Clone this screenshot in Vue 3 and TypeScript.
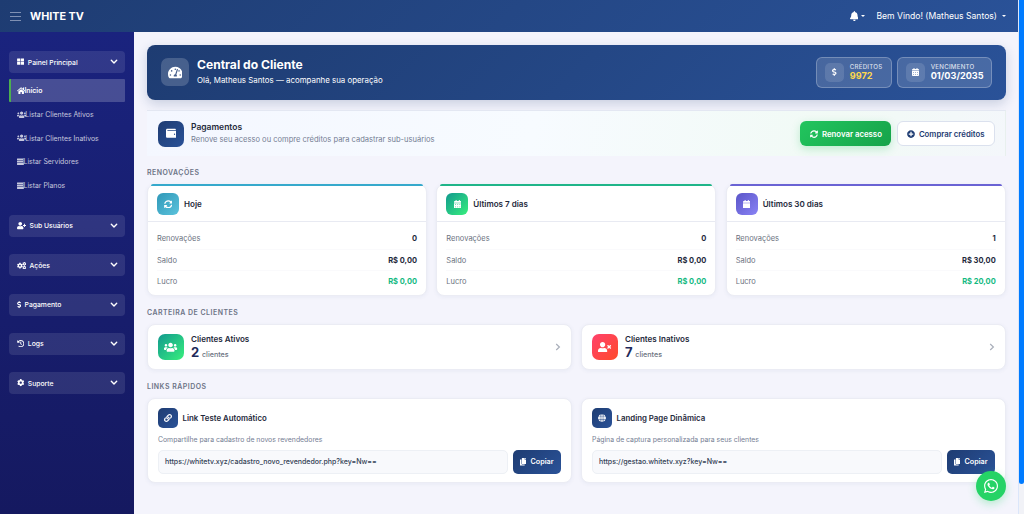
<script setup lang="ts">
import { defineComponent, h } from 'vue'

interface Glyph { box: string; paths: string[] }

const person = 'M224 256c70.7 0 128-57.3 128-128S294.7 0 224 0 96 57.3 96 128s57.3 128 128 128zm89.6 32h-16.7c-22.2 10.2-46.9 16-72.9 16s-50.6-5.8-72.9-16h-16.7C60.2 288 0 348.2 0 422.4V464c0 26.5 21.5 48 48 48h352c26.5 0 48-21.5 48-48v-41.6c0-74.2-60.2-134.4-134.4-134.4z'

const glyphs: Record<string, Glyph> = {
  bell: { box: '0 0 448 512', paths: ['M224 512c35.32 0 63.97-28.65 63.97-64H160.03c0 35.35 28.65 64 63.97 64zm215.39-149.71c-19.32-20.76-55.47-51.99-55.47-154.29 0-77.7-54.48-139.9-127.94-155.16V32c0-17.67-14.32-32-31.98-32s-31.98 14.33-31.98 32v20.84C118.56 68.1 64.08 130.3 64.08 208c0 102.3-36.15 133.53-55.47 154.29-6 6.45-8.66 14.16-8.61 21.71.11 16.4 12.98 32 32.1 32h383.8c19.12 0 32-15.6 32.1-32 .05-7.55-2.61-15.27-8.61-21.71z'] },
  grid: { box: '0 0 512 512', paths: ['M24 32h208v208H0V56a24 24 0 0 1 24-24zM272 32h216a24 24 0 0 1 24 24v184H272zM0 272h232v208H24a24 24 0 0 1-24-24zM272 272h240v184a24 24 0 0 1-24 24H272z'] },
  home: { box: '0 0 576 512', paths: ['M280.37 148.26L96 300.11V464a16 16 0 0 0 16 16l112.06-.29a16 16 0 0 0 15.92-16V368a16 16 0 0 1 16-16h64a16 16 0 0 1 16 16v95.64a16 16 0 0 0 16 16.05L464 480a16 16 0 0 0 16-16V300L295.67 148.26a12.19 12.19 0 0 0-15.3 0zM571.6 251.47L488 182.56V44.05a12 12 0 0 0-12-12h-56a12 12 0 0 0-12 12v72.61L318.47 43a48 48 0 0 0-61 0L4.34 251.47a12 12 0 0 0-1.6 16.9l25.5 31A12 12 0 0 0 45.15 301l235.22-193.74a12.19 12.19 0 0 1 15.3 0L530.9 301a12 12 0 0 0 16.9-1.6l25.5-31a12 12 0 0 0-1.7-16.93z'] },
  users: { box: '0 0 640 512', paths: ['M96 224c35.3 0 64-28.7 64-64s-28.7-64-64-64-64 28.7-64 64 28.7 64 64 64zm448 0c35.3 0 64-28.7 64-64s-28.7-64-64-64-64 28.7-64 64 28.7 64 64 64zm32 32h-64c-17.6 0-33.5 7.1-45.1 18.6 40.3 22.1 68.9 62 75.1 109.4h66c17.7 0 32-14.3 32-32v-32c0-35.3-28.7-64-64-64zm-256 0c61.9 0 112-50.1 112-112S381.9 32 320 32 208 82.1 208 144s50.1 112 112 112zm76.8 32h-8.3c-20.8 10-43.9 16-68.5 16s-47.6-6-68.5-16h-8.3C179.6 288 128 339.6 128 403.2V432c0 26.5 21.5 48 48 48h288c26.5 0 48-21.5 48-48v-28.8c0-63.6-51.6-115.2-115.2-115.2zm-223.7-13.4C161.5 263.1 145.6 256 128 256H64c-35.3 0-64 28.7-64 64v32c0 17.7 14.3 32 32 32h65.9c6.3-47.4 34.9-87.3 75.2-109.4z'] },
  server: { box: '0 0 512 512', paths: ['M24 32h464a24 24 0 0 1 24 24v80a24 24 0 0 1-24 24H24a24 24 0 0 1-24-24V56a24 24 0 0 1 24-24zm400 40v48h48V72zM24 192h464a24 24 0 0 1 24 24v80a24 24 0 0 1-24 24H24a24 24 0 0 1-24-24v-80a24 24 0 0 1 24-24zm400 40v48h48v-48zM24 352h464a24 24 0 0 1 24 24v80a24 24 0 0 1-24 24H24a24 24 0 0 1-24-24v-80a24 24 0 0 1 24-24zm400 40v48h48v-48z'] },
  userPlus: { box: '0 0 640 512', paths: ['M624 208h-64v-64c0-8.8-7.2-16-16-16h-32c-8.8 0-16 7.2-16 16v64h-64c-8.8 0-16 7.2-16 16v32c0 8.8 7.2 16 16 16h64v64c0 8.8 7.2 16 16 16h32c8.8 0 16-7.2 16-16v-64h64c8.8 0 16-7.2 16-16v-32c0-8.8-7.2-16-16-16z', person] },
  userTimes: { box: '0 0 640 512', paths: ['M589.6 240l45.6-45.6c6.3-6.3 6.3-16.5 0-22.8l-22.8-22.8c-6.3-6.3-16.5-6.3-22.8 0L544 194.4l-45.6-45.6c-6.3-6.3-16.5-6.3-22.8 0l-22.8 22.8c-6.3 6.3-6.3 16.5 0 22.8l45.6 45.6-45.6 45.6c-6.3 6.3-6.3 16.5 0 22.8l22.8 22.8c6.3 6.3 16.5 6.3 22.8 0l45.6-45.6 45.6 45.6c6.3 6.3 16.5 6.3 22.8 0l22.8-22.8c6.3-6.3 6.3-16.5 0-22.8L589.6 240z', person] },
  dollar: { box: '0 0 288 512', paths: ['M209.2 233.4l-108-31.6C88.7 198.2 80 186.5 80 173.5c0-16.3 13.2-29.5 29.5-29.5h66.3c12.2 0 24.2 3.7 34.2 10.5 6.1 4.1 14.3 3.1 19.5-2l34.8-34c7.1-6.9 6.1-18.4-1.8-24.5C238 74.8 207.4 64.1 176 64V16c0-8.8-7.2-16-16-16h-32c-8.8 0-16 7.2-16 16v48h-2.5C45.8 64-5.4 118.7.5 183.6c4.2 46.1 39.4 83.6 83.8 96.6l102.5 30c12.5 3.7 21.2 15.3 21.2 28.3 0 16.3-13.2 29.5-29.5 29.5h-66.3C100 368 88 364.3 78 357.5c-6.1-4.1-14.3-3.1-19.5 2l-34.8 34c-7.1 6.9-6.1 18.4 1.8 24.5 24.5 19.2 55.1 29.9 86.5 30v48c0 8.8 7.2 16 16 16h32c8.8 0 16-7.2 16-16v-48.2c46.6-.9 90.3-28.6 105.7-72.7 21.5-61.6-14.6-124.8-72.5-141.7z'] },
  cog: { box: '0 0 512 512', paths: ['M487.4 315.7l-42.6-24.6c4.3-23.2 4.3-47 0-70.2l42.6-24.6c4.9-2.8 7.1-8.6 5.5-14-11.1-35.6-30-67.8-54.7-94.6-3.8-4.1-10-5.1-14.8-2.3L380.8 110c-17.9-15.4-38.5-27.3-60.8-35.1V25.8c0-5.6-3.9-10.5-9.4-11.7-36.7-8.2-74.3-7.8-109.2 0-5.5 1.2-9.4 6.1-9.4 11.7V75c-22.2 7.9-42.8 19.8-60.8 35.1L88.7 85.5c-4.9-2.8-11-1.9-14.8 2.3-24.7 26.7-43.6 58.9-54.7 94.6-1.7 5.4.6 11.2 5.5 14L67.3 221c-4.3 23.2-4.3 47 0 70.2l-42.6 24.6c-4.9 2.8-7.1 8.6-5.5 14 11.1 35.6 30 67.8 54.7 94.6 3.8 4.1 10 5.1 14.8 2.3l42.6-24.6c17.9 15.4 38.5 27.3 60.8 35.1v49.2c0 5.6 3.9 10.5 9.4 11.7 36.7 8.2 74.3 7.8 109.2 0 5.5-1.2 9.4-6.1 9.4-11.7v-49.2c22.2-7.9 42.8-19.8 60.8-35.1l42.6 24.6c4.9 2.8 11 1.9 14.8-2.3 24.7-26.7 43.6-58.9 54.7-94.6 1.5-5.5-.7-11.3-5.6-14.1zM256 336c-44.1 0-80-35.9-80-80s35.9-80 80-80 80 35.9 80 80-35.9 80-80 80z'] },
  history: { box: '0 0 512 512', paths: ['M504 255.531c.253 136.64-111.18 248.372-247.82 248.468-59.015.042-113.223-20.53-155.822-54.911-11.077-8.94-11.905-25.541-1.839-35.607l11.267-11.267c8.609-8.609 22.353-9.551 31.891-1.984C173.062 425.135 212.781 440 256 440c101.705 0 184-82.311 184-184 0-101.705-82.311-184-184-184-48.814 0-93.149 18.969-126.068 49.932l50.754 50.754c10.08 10.08 2.941 27.314-11.313 27.314H24c-8.837 0-16-7.163-16-16V38.627c0-14.254 17.234-21.393 27.314-11.314l49.372 49.372C129.209 34.136 189.552 8 256 8c136.81 0 247.747 110.78 248 247.531zm-180.912 78.784l9.823-12.63c8.138-10.463 6.253-25.542-4.21-33.679L288 256.349V152c0-13.255-10.745-24-24-24h-16c-13.255 0-24 10.745-24 24v135.651l65.409 50.874c10.463 8.137 25.541 6.253 33.679-4.21z'] },
  gauge: { box: '0 0 576 512', paths: ['M288 32C128.94 32 0 160.94 0 320c0 52.8 14.25 102.26 39.06 144.8 5.61 9.62 16.3 15.2 27.44 15.2h443c11.14 0 21.83-5.58 27.44-15.2C561.75 422.26 576 372.8 576 320c0-159.06-128.94-288-288-288zm0 64c14.71 0 26.58 10.13 30.32 23.65-1.11 2.26-2.64 4.23-3.45 6.67l-9.22 27.67c-5.13 3.49-10.97 6.01-17.64 6.01-17.67 0-32-14.33-32-32S270.33 96 288 96zM96 384c-17.67 0-32-14.33-32-32s14.33-32 32-32 32 14.33 32 32-14.33 32-32 32zm48-160c-17.67 0-32-14.33-32-32s14.33-32 32-32 32 14.33 32 32-14.33 32-32 32zm246.77-72.41l-61.33 184C343.13 347.33 352 364.54 352 384c0 11.72-3.38 22.55-8.88 32H232.88c-5.5-9.45-8.88-20.28-8.88-32 0-33.94 26.5-61.43 59.9-63.59l61.34-184.01c4.17-12.56 17.73-19.45 30.36-15.17 12.57 4.19 19.35 17.79 15.17 30.36zm14.66 57.2l15.52-46.55c3.47-1.29 7.13-2.23 11.05-2.23 17.67 0 32 14.33 32 32s-14.33 32-32 32c-11.38-.01-20.89-6.28-26.57-15.22zM480 384c-17.67 0-32-14.33-32-32s14.33-32 32-32 32 14.33 32 32-14.33 32-32 32z'] },
  wallet: { box: '0 0 512 512', paths: ['M461.2 128H80c-8.84 0-16-7.16-16-16s7.16-16 16-16h384c8.84 0 16-7.16 16-16 0-26.51-21.49-48-48-48H64C28.65 32 0 60.65 0 96v320c0 35.35 28.65 64 64 64h397.2c28.02 0 50.8-21.53 50.8-48V176c0-26.47-22.78-48-50.8-48zM416 336c-17.67 0-32-14.33-32-32s14.33-32 32-32 32 14.33 32 32-14.33 32-32 32z'] },
  sync: { box: '0 0 512 512', paths: ['M370.72 133.28C339.458 104.008 298.888 87.962 255.848 88c-77.458.068-144.328 53.178-162.791 126.85-1.344 5.363-6.122 9.15-11.651 9.15H24.103c-7.498 0-13.194-6.807-11.807-14.176C33.933 94.924 134.813 8 256 8c66.448 0 126.791 26.136 171.315 68.685L463.03 40.97C478.149 25.851 504 36.559 504 57.941V192c0 13.255-10.745 24-24 24H345.941c-21.382 0-32.09-25.851-16.971-40.971l41.75-41.749zM32 296h134.059c21.382 0 32.09 25.851 16.971 40.971l-41.75 41.75c31.262 29.273 71.835 45.319 114.876 45.28 77.418-.07 144.315-53.144 162.787-126.849 1.344-5.363 6.122-9.15 11.651-9.15h57.304c7.498 0 13.194 6.807 11.807 14.176C478.067 417.076 377.187 504 256 504c-66.448 0-126.791-26.136-171.315-68.685L48.97 471.03C33.851 486.149 8 475.441 8 454.059V320c0-13.255 10.745-24 24-24z'] },
  plusCircle: { box: '0 0 512 512', paths: ['M256 8C119 8 8 119 8 256s111 248 248 248 248-111 248-248S393 8 256 8zm144 276c0 6.6-5.4 12-12 12h-92v92c0 6.6-5.4 12-12 12h-56c-6.6 0-12-5.4-12-12v-92h-92c-6.6 0-12-5.4-12-12v-56c0-6.6 5.4-12 12-12h92v-92c0-6.6 5.4-12 12-12h56c6.6 0 12 5.4 12 12v92h92c6.6 0 12 5.4 12 12v56z'] },
  calendar: { box: '0 0 448 512', paths: ['M12 192h424c6.6 0 12 5.4 12 12v260c0 26.5-21.5 48-48 48H48c-26.5 0-48-21.5-48-48V204c0-6.6 5.4-12 12-12zm436-44v-36c0-26.5-21.5-48-48-48h-48V12c0-6.6-5.4-12-12-12h-40c-6.6 0-12 5.4-12 12v52H160V12c0-6.6-5.4-12-12-12h-40c-6.6 0-12 5.4-12 12v52H48C21.5 64 0 85.5 0 112v36c0 6.6 5.4 12 12 12h424c6.6 0 12-5.4 12-12z'] },
  calendarDays: { box: '0 0 448 512', paths: ['M0 192h448v272c0 26.5-21.5 48-48 48H48c-26.5 0-48-21.5-48-48zM72 256v48h48v-48zm128 0v48h48v-48zm128 0v48h48v-48zM72 384v48h48v-48zm128 0v48h48v-48zm128 0v48h48v-48zM448 160v-48c0-26.5-21.5-48-48-48h-48V12c0-6.6-5.4-12-12-12h-40c-6.6 0-12 5.4-12 12v52H160V12c0-6.6-5.4-12-12-12h-40c-6.6 0-12 5.4-12 12v52H48C21.5 64 0 85.5 0 112v48z'] },
  link: { box: '0 0 512 512', paths: ['M326.612 185.391c59.747 59.809 58.927 155.698.36 214.59-.11.12-.24.25-.36.37l-67.2 67.2c-59.27 59.27-155.699 59.262-214.96 0-59.27-59.26-59.27-155.7 0-214.96l37.106-37.106c9.84-9.84 26.786-3.3 27.294 10.606.648 17.722 3.826 35.527 9.69 52.721 1.986 5.822.567 12.262-3.783 16.612l-13.087 13.087c-28.026 28.026-28.905 73.66-1.155 101.96 28.024 28.579 74.086 28.749 102.325.51l67.2-67.19c28.191-28.191 28.073-73.757 0-101.83-3.701-3.694-7.429-6.564-10.341-8.569a16.037 16.037 0 0 1-6.947-12.606c-.396-10.567 3.348-21.456 11.698-29.806l21.054-21.055c5.521-5.521 14.182-6.199 20.584-1.731a152.482 152.482 0 0 1 20.522 17.197zM467.547 44.449c-59.261-59.262-155.69-59.27-214.96 0l-67.2 67.2c-.12.12-.25.25-.36.37-58.566 58.892-59.387 154.781.36 214.59a152.454 152.454 0 0 0 20.521 17.196c6.402 4.468 15.064 3.789 20.584-1.731l21.054-21.055c8.35-8.35 12.094-19.239 11.698-29.806a16.037 16.037 0 0 0-6.947-12.606c-2.912-2.005-6.64-4.875-10.341-8.569-28.073-28.073-28.191-73.639 0-101.83l67.2-67.19c28.239-28.239 74.3-28.069 102.325.51 27.75 28.3 26.872 73.934-1.155 101.96l-13.087 13.087c-4.35 4.35-5.769 10.79-3.783 16.612 5.864 17.194 9.042 34.999 9.69 52.721.509 13.906 17.454 20.446 27.294 10.606l37.106-37.106c59.271-59.259 59.271-155.699.001-214.959z'] },
  globe: { box: '0 0 512 512', paths: ['M240 8C190 18 160 80 154 152h86zM272 8v144h86C352 80 322 18 272 8zM150 176q-6 80 0 160h90V176zM272 176v160h90q6-80 0-160zM154 360c6 72 36 134 86 144V360zM272 360v144c50-10 80-72 86-144zM181 19A248 248 0 0 0 34 152h94c5-54 20-104 53-133zM331 19c33 29 48 79 53 133h94A248 248 0 0 0 331 19zM22 176a248 248 0 0 0 0 160h102q-6-80 0-160zM388 176q6 80 0 160h102a248 248 0 0 0 0-160zM34 360a248 248 0 0 0 147 133c-33-29-48-79-53-133zM384 360c-5 54-20 104-53 133a248 248 0 0 0 147-133z'] },
  copy: { box: '0 0 448 512', paths: ['M320 448v40c0 13.255-10.745 24-24 24H24c-13.255 0-24-10.745-24-24V120c0-13.255 10.745-24 24-24h72v296c0 30.879 25.121 56 56 56h168zm0-344V0H152c-13.255 0-24 10.745-24 24v368c0 13.255 10.745 24 24 24h272c13.255 0 24-10.745 24-24V128H344c-13.2 0-24-10.8-24-24zm120.971-31.029L375.029 7.029A24 24 0 0 0 358.059 0H352v96h96v-6.059a24 24 0 0 0-7.029-16.97z'] },
  whatsapp: { box: '0 0 448 512', paths: ['M380.9 97.1C339 55.1 283.2 32 223.9 32c-122.4 0-222 99.6-222 222 0 39.1 10.2 77.3 29.6 111L0 480l117.7-30.9c32.4 17.7 68.9 27 106.1 27h.1c122.3 0 224.1-99.6 224.1-222 0-59.3-25.2-115-67.1-157zm-157 341.6c-33.2 0-65.7-8.9-94-25.7l-6.7-4-69.8 18.3L72 359.2l-4.4-7c-18.5-29.4-28.2-63.3-28.2-98.2 0-101.7 82.8-184.5 184.6-184.5 49.3 0 95.6 19.2 130.4 54.1 34.8 34.9 56.2 81.2 56.1 130.5 0 101.8-84.9 184.6-186.6 184.6zm101.2-138.2c-5.5-2.8-32.8-16.2-37.9-18-5.1-1.9-8.8-2.8-12.5 2.8-3.7 5.6-14.3 18-17.6 21.8-3.2 3.7-6.5 4.2-12 1.4-32.6-16.3-54-29.1-75.5-66-5.7-9.8 5.7-9.1 16.3-30.3 1.8-3.7.9-6.9-.5-9.7-1.4-2.8-12.5-30.1-17.1-41.2-4.5-10.8-9.1-9.3-12.5-9.5-3.2-.2-6.9-.2-10.6-.2-3.7 0-9.7 1.4-14.8 6.9-5.1 5.6-19.4 19-19.4 46.3 0 27.3 19.9 53.7 22.6 57.4 2.8 3.7 39.1 59.7 94.8 83.8 35.2 15.2 49 16.5 66.6 13.9 10.7-1.6 32.8-13.4 37.4-26.4 4.6-13 4.6-24.1 3.2-26.4-1.3-2.5-5-3.9-10.5-6.6z'] },
}

const Icon = defineComponent({
  props: { name: { type: String, required: true } },
  setup(props) {
    return () => {
      if (props.name === 'cogs') {
        const d = glyphs.cog.paths[0]
        return h('svg', { viewBox: '0 0 640 512', fill: 'currentColor', 'fill-rule': 'evenodd' }, [
          h('path', { d, transform: 'translate(-6 46) scale(.82)' }),
          h('path', { d, transform: 'translate(376 -8) scale(.53)' }),
          h('path', { d, transform: 'translate(376 254) scale(.53)' }),
        ])
      }
      const g = glyphs[props.name]
      return h('svg', { viewBox: g.box, fill: 'currentColor', 'fill-rule': 'evenodd' }, g.paths.map((d) => h('path', { d })))
    }
  },
})

const mainLinks = [
  { icon: 'home', label: 'Início', active: true },
  { icon: 'users', label: 'Listar Clientes Ativos', active: false },
  { icon: 'users', label: 'Listar Clientes Inativos', active: false },
  { icon: 'server', label: 'Listar Servidores', active: false },
  { icon: 'server', label: 'Listar Planos', active: false },
]

const groups = [
  { icon: 'userPlus', label: 'Sub Usuários', cls: 'wide' },
  { icon: 'cogs', label: 'Ações', cls: 'wide' },
  { icon: 'dollar', label: 'Pagamento', cls: 'thin' },
  { icon: 'history', label: 'Logs', cls: '' },
  { icon: 'cog', label: 'Suporte', cls: '' },
]

const renewals = [
  { tone: 'cyan', icon: 'sync', title: 'Hoje', count: '0', saldo: 'R$ 0,00', lucro: 'R$ 0,00' },
  { tone: 'green', icon: 'calendarDays', title: 'Últimos 7 dias', count: '0', saldo: 'R$ 0,00', lucro: 'R$ 0,00' },
  { tone: 'violet', icon: 'calendar', title: 'Últimos 30 dias', count: '1', saldo: 'R$ 30,00', lucro: 'R$ 20,00' },
]

const wallets = [
  { tone: 'green', icon: 'users', title: 'Clientes Ativos', total: 2 },
  { tone: 'red', icon: 'userTimes', title: 'Clientes Inativos', total: 7 },
]

const links = [
  { icon: 'link', title: 'Link Teste Automático', text: 'Compartilhe para cadastro de novos revendedores', url: 'https://whitetv.xyz/cadastro_novo_revendedor.php?key=Nw==' },
  { icon: 'globe', title: 'Landing Page Dinâmica', text: 'Página de captura personalizada para seus clientes', url: 'https://gestao.whitetv.xyz?key=Nw==' },
]
</script>

<template>
  <div class="page">
    <div class="screen">
      <header class="topbar">
        <span class="burger"><i /><i /><i /></span>
        <strong class="brand">WHITE TV</strong>
        <Icon name="bell" class="bell" />
        <span class="caret" />
        <span class="welcome">Bem Vindo! (Matheus Santos)</span>
        <span class="caret" />
      </header>
      <div class="body">
        <nav class="sidebar">
          <div class="group">
            <Icon name="grid" class="gi" /><span>Painel Principal</span>
            <svg class="chev" viewBox="0 0 8 6"><path d="M1.3 1.3 4 4l2.7-2.7" /></svg>
          </div>
          <ul class="sub">
            <li v-for="l in mainLinks" :key="l.label" :class="{ active: l.active }">
              <Icon :name="l.icon" class="li" /><span>{{ l.label }}</span>
            </li>
          </ul>
          <div v-for="g in groups" :key="g.label" class="group" :class="g.cls">
            <Icon :name="g.icon" class="gi" /><span>{{ g.label }}</span>
            <svg class="chev" viewBox="0 0 8 6"><path d="M1.3 1.3 4 4l2.7-2.7" /></svg>
          </div>
        </nav>
        <main class="main">
          <section class="hero">
            <div class="hero-icon"><Icon name="gauge" /></div>
            <div class="hero-text">
              <h1>Central do Cliente</h1>
              <p>Olá, Matheus Santos — acompanhe sua operação</p>
            </div>
            <div class="stat credits">
              <div class="stat-icon"><Icon name="dollar" /></div>
              <div><small>CRÉDITOS</small><b class="gold">9972</b></div>
            </div>
            <div class="stat due">
              <div class="stat-icon"><Icon name="calendarDays" /></div>
              <div><small>VENCIMENTO</small><b>01/03/2035</b></div>
            </div>
          </section>

          <section class="pay">
            <div class="tile navy"><Icon name="wallet" /></div>
            <div class="pay-text">
              <h2>Pagamentos</h2>
              <p>Renove seu acesso ou compre créditos para cadastrar sub-usuários</p>
            </div>
            <button class="btn renew"><Icon name="sync" /><span>Renovar acesso</span></button>
            <button class="btn buy"><Icon name="plusCircle" /><span>Comprar créditos</span></button>
          </section>

          <h3 class="label">RENOVAÇÕES</h3>
          <div class="cols three">
            <article v-for="r in renewals" :key="r.title" class="card renewal" :class="'top-' + r.tone">
              <header>
                <div class="tile small" :class="r.tone"><Icon :name="r.icon" /></div>
                <h4>{{ r.title }}</h4>
              </header>
              <dl>
                <div><dt>Renovações</dt><dd>{{ r.count }}</dd></div>
                <div><dt>Saldo</dt><dd>{{ r.saldo }}</dd></div>
                <div><dt>Lucro</dt><dd class="profit">{{ r.lucro }}</dd></div>
              </dl>
            </article>
          </div>

          <h3 class="label">CARTEIRA DE CLIENTES</h3>
          <div class="cols two">
            <article v-for="w in wallets" :key="w.title" class="card wallet">
              <div class="tile" :class="w.tone"><Icon :name="w.icon" /></div>
              <div class="wallet-text">
                <h4>{{ w.title }}</h4>
                <p><b>{{ w.total }}</b> clientes</p>
              </div>
              <svg class="next" viewBox="0 0 6 8"><path d="M1.2 1 4.4 4 1.2 7" /></svg>
            </article>
          </div>

          <h3 class="label last">LINKS RÁPIDOS</h3>
          <div class="cols two">
            <article v-for="k in links" :key="k.title" class="card quick">
              <header>
                <div class="tile mini navy"><Icon :name="k.icon" /></div>
                <h4>{{ k.title }}</h4>
              </header>
              <p>{{ k.text }}</p>
              <div class="copy-row">
                <div class="url">{{ k.url }}</div>
                <button class="btn copy"><Icon name="copy" /><span>Copiar</span></button>
              </div>
            </article>
          </div>
        </main>
      </div>
    </div>
    <div class="scroll"><div class="thumb" /></div>
    <a class="whats"><Icon name="whatsapp" /></a>
  </div>
</template>

<style>
html, body { margin: 0; overflow: hidden; }
</style>

<style scoped>
* { box-sizing: border-box; }
h1, h2, h3, h4, p, dl, dd, ul { margin: 0; padding: 0; }
svg { display: block; flex: none; }
.page { width: 1024px; height: 514px; display: flex; overflow: hidden; font-family: Inter, "Liberation Sans", sans-serif; background: #f4f4fc; }
.screen { flex: 1; display: flex; flex-direction: column; min-width: 0; }
.scroll { width: 6px; background: #f1f2f7; border-left: 1px solid #dbe6fa; }
.thumb { height: 484px; background: #007bff; border-radius: 0 0 3px 3px; }
.topbar { height: 32px; flex: none; display: flex; align-items: center; color: #fff; background: linear-gradient(135deg, #1e3c72, #2a5298); padding: 0 12px 0 10px; }
.burger { display: flex; flex-direction: column; gap: 3px; width: 10.5px; margin-right: 9.5px; padding-top: 1px; }
.burger i { height: 1px; background: #7f90b3; }
.brand { font-size: 10.8px; font-weight: 700; flex: 1; }
.bell { height: 10px; margin-right: 3px; }
.caret { border: 2px solid transparent; border-top: 2.3px solid #fff; border-bottom: 0; }
.welcome { font-size: 8.6px; margin: 0 5px 0 11px; }
.body { flex: 1; display: flex; min-height: 0; }
.sidebar { width: 134px; flex: none; padding: 19px 9px 0 8.5px; background: linear-gradient(180deg, #1a237e, #151960); color: #fff; }
.group { height: 22px; margin-bottom: 17.3px; border-radius: 4px; background: rgba(255,255,255,.1); display: flex; align-items: center; padding: 0 7.5px 0 8px; font-size: 6.8px; font-weight: 500; }
.gi { height: 7.3px; width: 7.5px; margin-right: 3.8px; }
.wide .gi { width: 9.2px; }
.thin .gi { width: 4.3px; }
.group span { flex: 1; }
.chev { width: 8px; height: 6px; fill: none; stroke: #fff; stroke-width: 1.4; stroke-linecap: round; stroke-linejoin: round; }
.sub { list-style: none; margin: -11.5px 0 17.7px; }
.sub li { height: 23.7px; display: flex; align-items: center; padding-left: 8px; font-size: 6.9px; color: rgba(255,255,255,.75); }
.sub li.active { color: #fff; font-weight: 600; background: rgba(255,255,255,.2); border-left: 2px solid #4caf50; padding-left: 6px; border-radius: 1px; }
.li { height: 7.4px; margin-right: -.4px; }
.main { flex: 1; padding: 13px 12.3px 0 13px; min-width: 0; }
.hero { height: 54.5px; border-radius: 8px; background: linear-gradient(135deg, #1e3c72, #2a5298); color: #fff; display: flex; align-items: center; padding: 0 14px; box-shadow: 0 4px 12px rgba(30,60,114,.2); }
.hero-icon { width: 28px; height: 28px; border-radius: 7px; background: rgba(255,255,255,.18); display: grid; place-items: center; margin-right: 8px; }
.hero-icon svg { height: 13px; }
.hero-text { flex: 1; padding-bottom: 2px; }
h1 { font-size: 12.1px; line-height: 16px; font-weight: 700; }
.hero-text p { font-size: 7.88px; line-height: 11px; margin-top: 1.5px; }
.stat { height: 31px; border: 1px solid rgba(255,255,255,.25); border-radius: 6px; background: rgba(255,255,255,.15); display: flex; align-items: center; padding-left: 8px; }
.credits { width: 76px; margin-right: 5px; }
.due { width: 95px; }
.stat-icon { width: 19.5px; height: 19.5px; border-radius: 5px; background: rgba(255,255,255,.12); display: grid; place-items: center; margin-right: 5.5px; }
.stat-icon svg { height: 8px; }
.stat small { display: block; font-size: 6.15px; line-height: 8px; letter-spacing: .25px; color: rgba(255,255,255,.8); font-weight: 500; }
.stat b { display: block; font-size: 9.15px; line-height: 10px; }
.stat .gold { color: #ffd84d; }
.pay { height: 46px; margin-top: 10.5px; border-top: 1px solid #e3e7f2; background: linear-gradient(100deg, #f4f7ff, #f7fbff 45%, #f1faf5 80%, #f4f7fb); border-right: 1px solid #e8f0ee; display: flex; align-items: center; padding: 0 10px 0 11px; gap: 5.3px; }
.tile { width: 26px; height: 26px; border-radius: 7px; display: grid; place-items: center; color: #fff; flex: none; }
.tile svg { height: 10.5px; }
.tile.small { width: 22px; height: 22px; border-radius: 6px; }
.tile.small svg { height: 8.5px; }
.tile.mini { width: 19.5px; height: 19.5px; border-radius: 5px; }
.tile.mini svg { height: 8px; }
.navy { background: linear-gradient(135deg, #1e3c72, #2a5298); }
.cyan { background: linear-gradient(135deg, #2f98b8, #5cc3dc); }
.green { background: linear-gradient(135deg, #11998e, #38ef7d); }
.violet { background: linear-gradient(135deg, #5a55c8, #8a83f5); }
.red { background: linear-gradient(135deg, #ff416c, #ff4b2b); }
.pay-text { flex: 1; padding: 0 0 1px 1.7px; }
h2 { font-size: 8.5px; line-height: 12px; font-weight: 600; color: #1e293b; position: relative; top: -.5px; }
.pay-text p { font-size: 7.56px; line-height: 10px; margin-top: 2px; color: #757e94; }
.btn { border: 0; font: 600 7.8px Inter, "Liberation Sans", sans-serif; color: #fff; display: flex; align-items: center; justify-content: center; gap: 4px; border-radius: 6px; padding: 0; }
.btn svg { height: 8px; }
.renew { width: 91px; height: 25px; background: linear-gradient(135deg, #22c55e, #16a34a); box-shadow: 0 3px 8px rgba(34,197,94,.25); }
.buy { width: 98px; height: 25px; background: #fff; color: #1e3c72; border: 1px solid #dbe1ee; }
.label { font-size: 6.95px; font-weight: 600; color: #6c7386; letter-spacing: .5px; line-height: 12px; margin: 11px 0 4.7px; }
.label.last { margin: 10.3px 0 5.4px; }
.cols { display: grid; gap: 9.3px; }
.three { grid-template-columns: repeat(3, 1fr); }
.two { grid-template-columns: repeat(2, 1fr); }
.card { background: #fff; border: 1px solid #ebecf4; border-radius: 8px; box-shadow: 0 1px 4px rgba(30,60,114,.06); }
.renewal { height: 112.5px; position: relative; }
.renewal::before { content: ""; position: absolute; left: 3px; right: 3px; top: -1px; height: 2px; border-radius: 2px 2px 0 0; background: var(--accent); }
.top-cyan { --accent: #36a9cc; }
.top-green { --accent: #20b589; }
.top-violet { --accent: #6a63d4; }
.renewal header { height: 37px; display: flex; align-items: center; gap: 5px; padding: 3px 9px 0; border-bottom: 1px solid #e8eaf2; }
h4 { font-size: 8.05px; font-weight: 600; color: #1e293b; }
dl { padding: 7.2px 9px 0; }
dl div { height: 21.2px; display: flex; align-items: center; justify-content: space-between; font-size: 7.5px; border-bottom: 1px solid #fafafc; }
dl div:last-child { border: 0; }
dt { color: #6b7280; }
dd { font-weight: 700; color: #1e293b; }
.profit { color: #12b981; }
.wallet { height: 46.5px; display: flex; align-items: center; padding: 0 10px; }
.wallet-text { flex: 1; padding: 2px 0 0 7px; }
.wallet h4 { line-height: 10.5px; }
.wallet p { font-size: 7.2px; line-height: 14.5px; font-weight: 500; color: #6b7280; }
.wallet b { font-size: 13px; color: #1e2a5a; font-weight: 700; margin-right: .8px; }
.next { width: 6px; height: 8px; fill: none; stroke: #a9aeba; stroke-width: 1.2; }
.quick { height: 85px; padding: 9px 10px; }
.quick header { display: flex; align-items: center; gap: 5px; }
.quick h4 { font-size: 7.85px; }
.quick p { font-size: 6.87px; line-height: 10px; color: #757e94; margin: 7.5px 0 5px; }
.copy-row { display: flex; gap: 4.5px; }
.url { flex: 1; height: 23.5px; line-height: 21px; border: 1px solid #edf0f5; background: #f8f9fc; border-radius: 5px; padding-left: 6px; font-size: 7.03px; font-weight: 500; color: #334155; white-space: nowrap; }
.copy { width: 48px; height: 23.5px; border-radius: 5px; background: linear-gradient(135deg, #1e3c72, #2a5298); font-size: 7.2px; }
.copy svg { height: 7.5px; }
.whats { position: absolute; left: 976px; top: 471px; width: 30px; height: 30px; border-radius: 50%; background: #25d366; color: #fff; display: grid; place-items: center; box-shadow: 0 3px 8px rgba(37,211,102,.3); }
.whats svg { height: 16px; }
</style>
